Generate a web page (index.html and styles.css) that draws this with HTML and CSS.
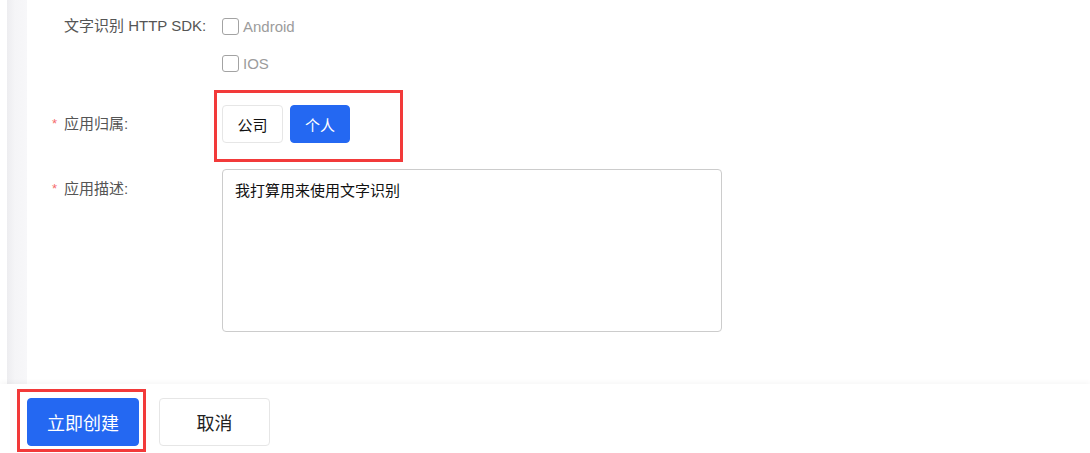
FILE: index.html
```html
<!DOCTYPE html>
<html lang="zh-CN">
<head>
<meta charset="utf-8">
<title>创建应用</title>
<link rel="stylesheet" href="styles.css">
</head>
<body>
<div class="page">
  <div class="strip"></div>
  <div class="content">
    <div class="row row-sdk">
      <div class="label"><span class="label-text">文字识别 HTTP SDK:</span></div>
      <div class="checks">
        <label class="check"><span class="box"></span><span class="check-text">Android</span></label>
        <label class="check"><span class="box"></span><span class="check-text">IOS</span></label>
      </div>
    </div>
    <div class="row row-owner">
      <div class="label label-owner"><span class="label-text"><span class="star">*</span>应用归属:</span></div>
      <div class="mark mark-owner">
        <button class="opt">公司</button>
        <button class="opt opt-active">个人</button>
      </div>
    </div>
    <div class="row row-desc">
      <div class="label label-desc"><span class="label-text"><span class="star">*</span>应用描述:</span></div>
      <textarea class="desc">我打算用来使用文字识别</textarea>
    </div>
  </div>
</div>
<div class="footer">
  <div class="mark mark-submit">
    <button class="btn btn-primary">立即创建</button>
  </div>
  <button class="btn btn-cancel">取消</button>
</div>
</body>
</html>
```

FILE: styles.css
```css
html, body {
  margin: 0;
  padding: 0;
  background: #fff;
}
body {
  width: 1090px;
  height: 453px;
  overflow: hidden;
  font-family: "Liberation Sans", "Noto Sans CJK SC", sans-serif;
  font-size: 15px;
  color: #333;
}
.page {
  display: flex;
  height: 384px;
  padding-left: 7px;
}
.strip {
  width: 20px;
  background: linear-gradient(to right, #ededf0, #f5f5f7 40%, #f7f7f9);
}
.content {
  flex: 1;
  padding-left: 37px;
  padding-top: 16px;
}
.row {
  display: flex;
  align-items: flex-start;
}
.label {
  width: 158px;
  line-height: 20px;
  color: #555;
  font-size: 15px;
  white-space: nowrap;
}
.label-text {
  position: relative;
}
.star {
  position: absolute;
  left: -12px;
  top: -1px;
  color: #f56c6c;
  font-size: 13px;
}
.checks {
  display: flex;
  flex-direction: column;
  gap: 17px;
}
.check {
  display: flex;
  align-items: center;
  height: 20px;
  color: #9c9c9c;
  font-size: 15px;
}
.box {
  width: 15px;
  height: 15px;
  border: 1px solid #a3a3a3;
  border-radius: 3px;
  margin-right: 4px;
  box-sizing: content-box;
}
.row-owner {
  margin-top: 17px;
}
.label-owner {
  padding-top: 24px;
}
.mark {
  border: 3px solid #f23a3a;
}
.mark-owner {
  margin-left: -8px;
  width: 189px;
  height: 72px;
  box-sizing: border-box;
  padding: 12px 0 0 5px;
  display: flex;
  gap: 7px;
  align-items: flex-start;
}
.opt {
  width: 61px;
  height: 38px;
  border: 1px solid #e6e6e6;
  border-radius: 4px;
  background: #fff;
  color: #111;
  font-family: "Noto Sans CJK SC", sans-serif;
  font-size: 15px;
  padding: 0;
}
.opt-active {
  width: 60px;
  background: #2468f2;
  border-color: #2468f2;
  color: #fff;
}
.row-desc {
  margin-top: 7px;
}
.label-desc {
  padding-top: 10px;
}
.desc {
  width: 500px;
  height: 163px;
  box-sizing: border-box;
  border: 1px solid #cccccc;
  border-radius: 4px;
  padding: 10px 12px;
  margin: 0;
  resize: none;
  font-family: "Noto Sans CJK SC", sans-serif;
  font-size: 15px;
  line-height: 20px;
  color: #111;
  outline: none;
}
.footer {
  height: 69px;
  display: flex;
  align-items: flex-start;
  padding-left: 17px;
  padding-top: 5px;
  box-sizing: border-box;
  box-shadow: 0 -2px 5px rgba(0, 0, 0, 0.035);
  position: relative;
}
.mark-submit {
  padding: 6px 4px 3px 7px;
}
.btn {
  width: 112px;
  height: 48px;
  border-radius: 4px;
  font-family: "Noto Sans CJK SC", sans-serif;
  font-size: 18px;
  padding: 0;
}
.btn-primary {
  display: block;
  background: #2468f2;
  border: 1px solid #2468f2;
  color: #fff;
}
.btn-cancel {
  width: 111px;
  margin-left: 13px;
  margin-top: 9px;
  background: #fff;
  border: 1px solid #e6e6e6;
  color: #222;
}
```
